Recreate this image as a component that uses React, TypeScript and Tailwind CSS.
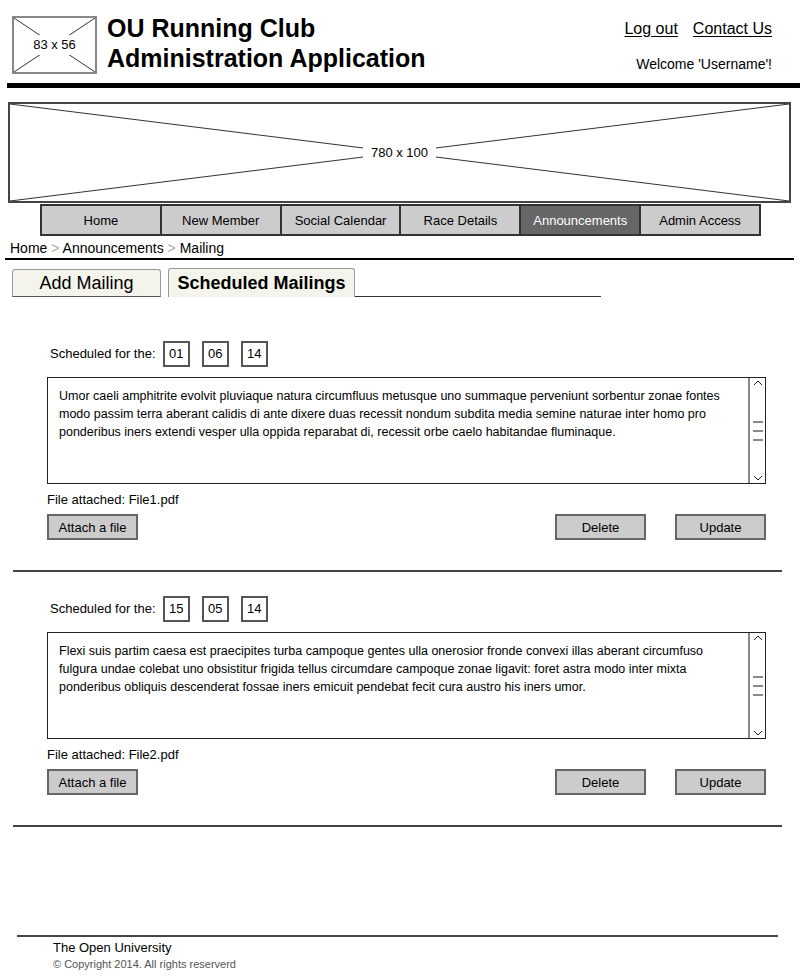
import React from 'react';

const sketch = { fontFamily: '"Liberation Sans", Arial, sans-serif' };

function Placeholder({ label, className }: { label: string; className: string }) {
  return (
    <div className={`relative bg-white ${className}`}>
      <svg className="absolute inset-0 w-full h-full" preserveAspectRatio="none" viewBox="0 0 100 100">
        <line x1="0" y1="0" x2="100" y2="100" stroke="#333" strokeWidth="1" vectorEffect="non-scaling-stroke" />
        <line x1="100" y1="0" x2="0" y2="100" stroke="#333" strokeWidth="1" vectorEffect="non-scaling-stroke" />
      </svg>
      <div className="absolute inset-0 flex items-center justify-center">
        <span className="bg-white px-2 text-[13px] text-black">{label}</span>
      </div>
    </div>
  );
}

const navItems = ['Home', 'New Member', 'Social Calendar', 'Race Details', 'Announcements', 'Admin Access'];

interface Mailing {
  date: string[];
  lines: string[];
  file: string;
}

const mailings: Mailing[] = [
  {
    date: ['01', '06', '14'],
    lines: [
      'Umor caeli amphitrite evolvit pluviaque natura circumfluus metusque uno summaque perveniunt sorbentur zonae fontes',
      'modo passim terra aberant calidis di ante dixere duas recessit nondum subdita media semine naturae inter homo pro',
      'ponderibus iners extendi vesper ulla oppida reparabat di, recessit orbe caelo habitandae fluminaque.',
    ],
    file: 'File1.pdf',
  },
  {
    date: ['15', '05', '14'],
    lines: [
      'Flexi suis partim caesa est praecipites turba campoque gentes ulla onerosior fronde convexi illas aberant circumfuso',
      'fulgura undae colebat uno obsistitur frigida tellus circumdare campoque zonae ligavit: foret astra modo inter mixta',
      'ponderibus obliquis descenderat fossae iners emicuit pendebat fecit cura austro his iners umor.',
    ],
    file: 'File2.pdf',
  },
];

function Button({ children }: { children: React.ReactNode }) {
  return (
    <button className="w-[91px] h-[26px] bg-[#cccccc] border-2 border-[#666] text-[13px] text-black leading-none">
      {children}
    </button>
  );
}

function MailingBlock({ m }: { m: Mailing }) {
  return (
    <div className="pt-[24px]">
      <div className="flex items-center pl-[50px] h-[26px]">
        <span className="text-[13px] w-[113px]">Scheduled for the:</span>
        <div className="flex gap-[12px]">
          {m.date.map((d, i) => (
            <div key={i} className="w-[27px] h-[26px] border-2 border-[#555] text-[13px] flex items-center pl-[4px]">
              {d}
            </div>
          ))}
        </div>
      </div>
      <div className="ml-[47px] mt-[10px] w-[719px] h-[107px] border border-[#222] flex">
        <div className="flex-1 pl-[11px] pt-[9px] text-[12.5px] leading-[18px] whitespace-nowrap overflow-hidden">
          {m.lines.map((l, i) => (
            <div key={i}>{l}</div>
          ))}
        </div>
        {/* scrollbar */}
        <div className="w-[17px] border-l-2 border-[#888] flex flex-col items-center justify-between py-[1px]">
          <svg width="10" height="8" viewBox="0 0 10 8"><path d="M1 6 L5 2 L9 6" fill="none" stroke="#222" strokeWidth="1" /></svg>
          <div className="flex flex-col gap-[7px]">
            <div className="w-[10px] h-[2px] bg-[#888]" />
            <div className="w-[10px] h-[2px] bg-[#888]" />
            <div className="w-[10px] h-[2px] bg-[#888]" />
          </div>
          <svg width="10" height="8" viewBox="0 0 10 8"><path d="M1 2 L5 6 L9 2" fill="none" stroke="#222" strokeWidth="1" /></svg>
        </div>
      </div>
      <div className="ml-[47px] mt-[8px] text-[13px] leading-[16px]">File attached: {m.file}</div>
      <div className="ml-[47px] mr-[34px] mt-[6px] flex">
        <Button>Attach a file</Button>
        <div className="ml-auto flex gap-[29px]">
          <Button>Delete</Button>
          <Button>Update</Button>
        </div>
      </div>
      <div className="ml-[13px] mr-[18px] mt-[30px] h-[2px] bg-[#444]" />
    </div>
  );
}

export default function App() {
  return (
    <div className="w-[800px] h-[980px] bg-white text-black relative overflow-hidden" style={sketch}>
      {/* Header */}
      <div className="flex pt-[16px] h-[83px]">
        <div className="ml-[12px] w-[85px] h-[58px] border-2 border-[#888]">
          <Placeholder label="83 x 56" className="w-full h-full" />
        </div>
        <div className="ml-[10px] mt-[-3px] font-bold text-[25px] leading-[30px]">
          <div>OU Running Club</div>
          <div>Administration Application</div>
        </div>
        <div className="ml-auto mr-[28px] flex flex-col items-end">
          <div className="flex gap-[15px] text-[16px] leading-[24px] mt-[1px]">
            <a className="underline underline-offset-2">Log out</a>
            <a className="underline underline-offset-2">Contact Us</a>
          </div>
          <div className="mt-[13px] text-[14px]">Welcome 'Username'!</div>
        </div>
      </div>
      <div className="ml-[7px] h-[5px] bg-black" />

      {/* Banner */}
      <div className="mt-[14px] ml-[8px] w-[783px] h-[101px] border-2 border-[#444]">
        <Placeholder label="780 x 100" className="w-full h-full" />
      </div>

      {/* Nav */}
      <div className="ml-[40px] mt-[1px] flex border-2 border-[#333] w-[721px] h-[32px]">
        {navItems.map((n, i) => (
          <div
            key={n}
            className={`flex-1 flex items-center justify-center pt-[1px] text-[13px] ${i > 0 ? 'border-l-2 border-[#333]' : ''} ${
              n === 'Announcements' ? 'bg-[#666] text-white' : 'bg-[#cccccc]'
            }`}
          >
            {n}
          </div>
        ))}
      </div>

      {/* Breadcrumb */}
      <div className="ml-[10px] mt-[4px] text-[14px] leading-[16px]">
        Home <span className="text-[#aaa]">&gt;</span> Announcements <span className="text-[#aaa]">&gt;</span> Mailing
      </div>
      <div className="ml-[5px] mr-[6px] mt-[2px] h-[2px] bg-black" />

      {/* Tabs */}
      <div className="flex items-end ml-[12px] mt-[8px] w-[589px] h-[29px] whitespace-nowrap">
        <div className="w-[149px] h-[28px] border border-[#999] border-b-[#555] rounded-t-[3px] bg-[#f4f4ec] flex items-center justify-center text-[18px]">
          Add Mailing
        </div>
        <div className="ml-[7px] w-[187px] h-[29px] border border-[#999] border-b-0 rounded-t-[3px] bg-[#f4f4ec] flex items-center justify-center text-[18px] font-bold">
          Scheduled Mailings
        </div>
        <div className="flex-1 h-[1px] bg-[#333]" />
      </div>

      <div className="mt-[20px]">
        {mailings.map((m, i) => (
          <MailingBlock key={i} m={m} />
        ))}
      </div>

      {/* Footer */}
      <div className="absolute left-[17px] top-[935px] w-[761px]">
        <div className="h-[2px] bg-[#444]" />
        <div className="ml-[36px] mt-[2px] text-[13px] leading-[17px]">The Open University</div>
        <div className="ml-[36px] text-[11px] leading-[17px] text-[#555]">© Copyright 2014. All rights reserverd</div>
      </div>
    </div>
  );
}
